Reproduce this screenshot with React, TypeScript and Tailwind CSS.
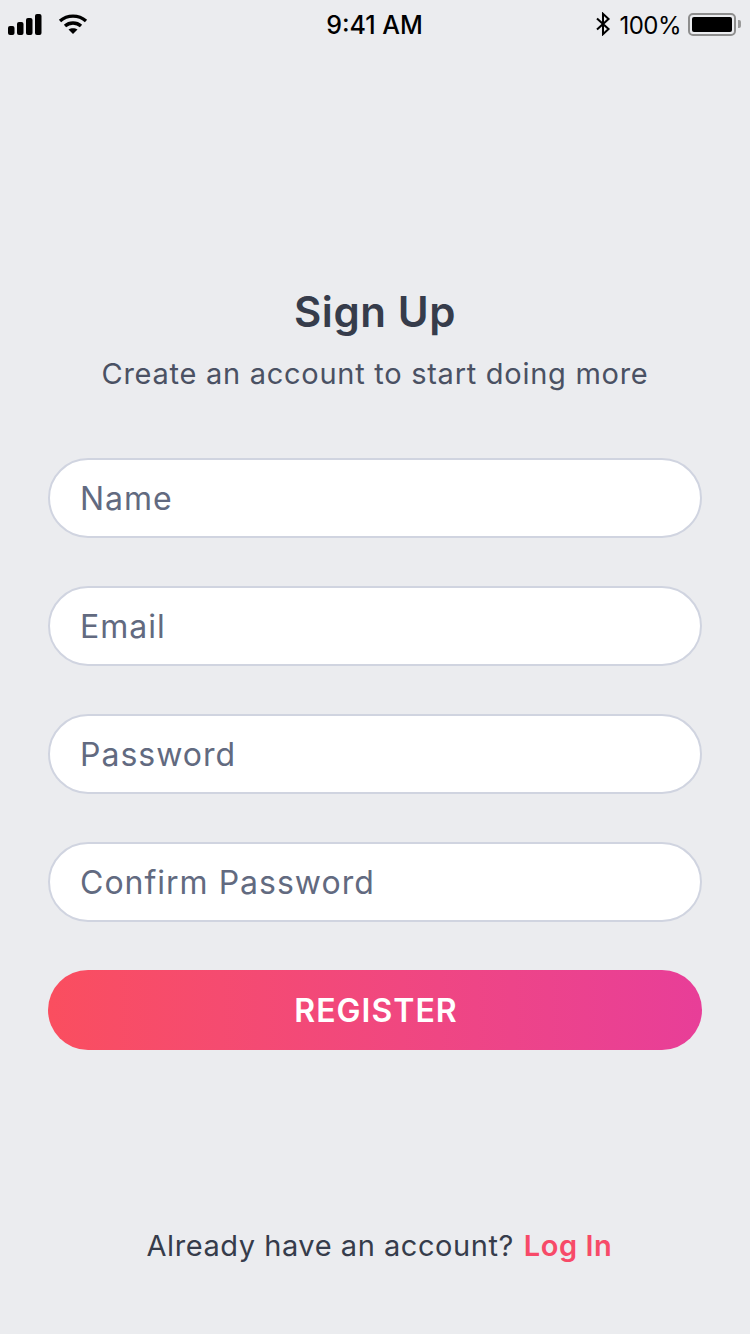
export default function App() {
  const font = "[font-family:Inter,'Liberation_Sans',sans-serif]";
  const fields = ["Name", "Email", "Password", "Confirm Password"];
  return (
    <div className={`w-[750px] h-[1334px] bg-[#ebecef] flex flex-col ${font}`}>
      <div className="h-[48px] flex items-center justify-between pl-[8px] pr-[9px] text-black">
        <div className="flex items-center gap-[16px] w-[200px]">
          <svg width="34" height="22" viewBox="0 0 34 22" fill="#000">
            <rect x="0" y="13" width="6.5" height="9" rx="2" />
            <rect x="9" y="9" width="6.5" height="13" rx="2" />
            <rect x="18" y="5" width="6.5" height="17" rx="2" />
            <rect x="27" y="1" width="6.5" height="21" rx="2" />
          </svg>
          <svg width="30" height="22" viewBox="0 0 30 22" fill="none" stroke="#000" strokeWidth="3.4">
            <path d="M2 8 C9.5 1.5 20.5 1.5 28 8" />
            <path d="M7 13 C11.5 9 18.5 9 23 13" />
            <path d="M15 21 L10.5 16.5 C13 14.8 17 14.8 19.5 16.5 Z" fill="#000" stroke="none" />
          </svg>
        </div>
        <div className="text-[25px] font-medium leading-none pt-[3px]">9:41 AM</div>
        <div className="flex items-center justify-end w-[200px]">
          <svg width="16" height="24" viewBox="0 0 16 26" fill="none" stroke="#000" strokeWidth="2.2" className="mr-[8px]">
            <path d="M1.5 7 L14 18.5 L8 24 V2 L14 7.5 L1.5 19" />
          </svg>
          <span className="text-[24px] leading-none mr-[7px] pt-[3px] tracking-[-0.5px]">100%</span>
          <div className="w-[48px] h-[23px] rounded-[5px] border-2 border-[#8e8e8e] p-[2px] flex">
            <div className="flex-1 bg-black rounded-[2px]" />
          </div>
          <div className="w-[3px] h-[8px] bg-[#9a9a9a] ml-[2px] rounded-r-[2px]" />
        </div>
      </div>
      <div className="pt-[238px] flex flex-col items-center">
        <h1 className="text-[42px] leading-[52px] font-semibold text-[#363c4b] tracking-[0.6px]">Sign Up</h1>
        <p className="mt-[14px] text-[29px] leading-[44px] text-[#4a5163] tracking-[0.73px]">Create an account to start doing more</p>
      </div>
      <div className="mt-[62px] px-[48px] flex flex-col gap-[48px]">
        {fields.map((f) => (
          <div key={f} className="h-[80px] rounded-[40px] bg-white border-2 border-[#d0d4e0] flex items-center pl-[30px] pt-[2px] text-[32px] text-[#626a80] tracking-[1px]">
            {f}
          </div>
        ))}
        <button className="h-[80px] rounded-[40px] bg-gradient-to-r from-[#fa4e5f] to-[#e83e98] text-white text-[32px] font-semibold tracking-[1px] pt-[2px] pl-[2px]">
          REGISTER
        </button>
      </div>
      <div className="mt-[176px] pl-[9px] flex justify-center items-center gap-[10px] text-[29px] leading-[40px] tracking-[0.55px]">
        <span className="text-[#363c4b]">Already have an account?</span>
        <span className="text-[#f74a68] font-semibold">Log In</span>
      </div>
    </div>
  );
}
